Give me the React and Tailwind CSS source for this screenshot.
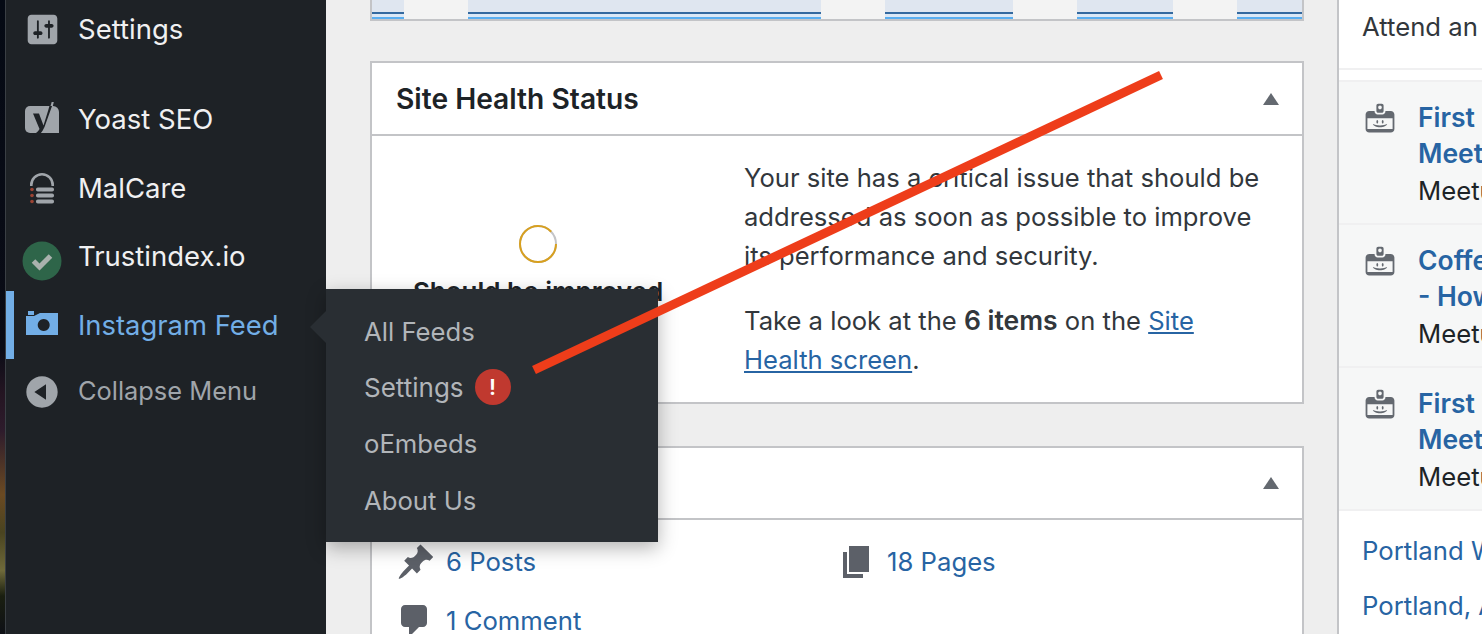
const font = { fontFamily: 'Inter, "Noto Sans", sans-serif' };

function Dash({ d, size = 40, className = "" }) {
  return (
    <svg viewBox="0 0 20 20" width={size} height={size} className={className} fill="currentColor">
      <path d={d} />
    </svg>
  );
}

const P = {
  settings: "M18 16V4c0-1.1-.9-2-2-2H4c-1.1 0-2 .9-2 2v12c0 1.1.9 2 2 2h12c1.1 0 2-.9 2-2zM8 11h1c.55 0 1 .45 1 1s-.45 1-1 1H8v1.5c0 .28-.22.5-.5.5s-.5-.22-.5-.5V13H6c-.55 0-1-.45-1-1s.45-1 1-1h1V5.5c0-.28.22-.5.5-.5s.5.22.5.5V11zm5-2h-1c-.55 0-1-.45-1-1s.45-1 1-1h1V5.5c0-.28.22-.5.5-.5s.5.22.5.5V7h1c.55 0 1 .45 1 1s-.45 1-1 1h-1v5.5c0 .28-.22.5-.5.5s-.5-.22-.5-.5V9z",
  collapse: "M10 2.16c4.33 0 7.84 3.51 7.84 7.84s-3.51 7.84-7.84 7.84S2.16 14.33 2.16 10 5.71 2.16 10 2.16zm2 11.72V6.12L6.18 9.97z",
  pin: "M10.44 3.02l1.82-1.82 6.36 6.35-1.83 1.82c-1.05-.68-2.48-.57-3.41.36l-.75.75c-.92.93-1.04 2.35-.35 3.41l-1.83 1.82-2.41-2.41-2.8 2.79c-.42.42-3.38 2.71-3.8 2.29s1.86-3.39 2.28-3.81l2.79-2.79L4.1 9.36l1.83-1.82c1.05.69 2.48.57 3.4-.36l.75-.75c.93-.92 1.05-2.35.36-3.41z",
  pages: "M6 15V2h10v13H6zm-1 1h8v2H3V5h2v11z",
  comment: "M5 2h9c1.1 0 2 .9 2 2v7c0 1.1-.9 2-2 2h-2l-5 5v-5H5c-1.1 0-2-.9-2-2V4c0-1.1.9-2 2-2z",
  nametag: "M12 5V2c0-.55-.45-1-1-1H9c-.55 0-1 .45-1 1v3c0 .55.45 1 1 1h2c.55 0 1-.45 1-1zm-2-3c.55 0 1 .45 1 1s-.45 1-1 1-1-.45-1-1 .45-1 1-1zm8 13V7c0-1.1-.9-2-2-2h-3v.33C13 6.25 12.25 7 11.33 7H8.67C7.75 7 7 6.25 7 5.33V5H4c-1.1 0-2 .9-2 2v8c0 1.1.9 2 2 2h12c1.1 0 2-.9 2-2zm-1-6v6H3V9h14zm-8 2c0-.55-.22-1-.5-1s-.5.45-.5 1 .22 1 .5 1 .5-.45.5-1zm3 0c0-.55-.22-1-.5-1s-.5.45-.5 1 .22 1 .5 1 .5-.45.5-1zm-5.96 1.21c.92.48 2.34.79 3.96.79s3.04-.31 3.96-.79c-.21 1-1.89 1.79-3.96 1.79s-3.75-.79-3.96-1.79z",
};

function YoastIcon() {
  return (
    <svg viewBox="0 0 36 42" width="36" height="42">
      <path d="M6 7h23a6 6 0 0 1 6 6v21H6a5 5 0 0 1-5-5V12a5 5 0 0 1 5-5z" fill="#a0a5aa" />
      <path d="M9 14.500h6l4.500 12L24 12l3-10.500h3L20.500 28c-2 5-5.500 9-10.500 11l-.8-3.500c3-1 5-3 6.300-5.500z" fill="#1e2226" />
      <path d="M27.700 3l-1.200 4h2.300l1-4z" fill="#a0a5aa" />
    </svg>
  );
}

function MalCareIcon() {
  return (
    <svg viewBox="0 0 28 32" width="28" height="32">
      <path d="M3.300 14V13a10.700 10.700 0 0 1 21.400 0v1" fill="none" stroke="#a0a5aa" strokeWidth="2.600" />
      <rect x="8" y="15.500" width="18" height="4" rx="1.800" fill="#a0a5aa" />
      <rect x="8" y="21.500" width="18" height="4" rx="1.800" fill="#a0a5aa" />
      <rect x="8" y="27.500" width="18" height="4" rx="1.800" fill="#a0a5aa" />
      <circle cx="4" cy="17.500" r="1.800" fill="#9c4433" />
      <circle cx="4" cy="23.500" r="1.800" fill="#9c4433" />
      <circle cx="4" cy="29.500" r="1.800" fill="#9c4433" />
    </svg>
  );
}

function TrustIcon() {
  return (
    <svg viewBox="0 0 40 40" width="40" height="40">
      <circle cx="20" cy="20" r="19.500" fill="#2e6549" />
      <path d="M11.500 20l6 6L28.500 15" fill="none" stroke="#a9b2ad" strokeWidth="5" />
    </svg>
  );
}

function CameraIcon() {
  return (
    <svg viewBox="0 0 32 24" width="32" height="24">
      <path fillRule="evenodd" fill="#72aee6" d="M2 0h6v4H2zM0 5h8l6-3h18v22H0zM17.700 8a6 6 0 1 0 .01 0z" />
    </svg>
  );
}

function MenuRow({ icon, label, h, active, muted, iconClass = "" }) {
  return (
    <div className={`flex items-center border-l-8 ${h} ${active ? "border-[#72aee6]" : "border-transparent"}`}>
      <div className={`w-[56px] mr-[8px] flex justify-center ${iconClass}`}>{icon}</div>
      <span className={active ? "text-[#72aee6] text-[27.4px]" : muted ? "text-[#a0a5aa] text-[25.4px]" : "text-[#f0f0f1] text-[27.5px]"}>{label}</span>
    </div>
  );
}

function Panel({ title, className, head, children }) {
  return (
    <section className={`border-2 border-[#c3c4c7] bg-white ${className}`}>
      <header className={`${head} flex items-center justify-between pl-[24px] pr-[23px] border-b-2 border-[#c3c4c7]`}>
        <h2 className="font-semibold text-[28.2px] pt-[2px] text-[#1d2327]">{title}</h2>
        <svg width="16" height="12" viewBox="0 0 16 12"><path d="M8 0l8 12H0z" fill="#646970" /></svg>
      </header>
      {children}
    </section>
  );
}

function Meetup({ a, b }) {
  return (
    <div className="h-[143px] border-t-2 border-[#f0f0f1] flex pl-[23px] pt-[17px] whitespace-nowrap">
      <div className="w-[56px] shrink-0 pt-[3px] text-[#646970]"><Dash d={P.nametag} size={36} /></div>
      <div className="leading-[36px]">
        <div className="font-semibold text-[26.5px] text-[#2764a3]">{a}</div>
        <div className="font-semibold text-[26.5px] text-[#2764a3]">{b}</div>
        <div className="text-[#1d2327] leading-[39px]">Meetup</div>
      </div>
    </div>
  );
}

function Chart() {
  const seg = (w, k) => (
    <div key={k} className="h-full flex flex-col" style={{ width: w }}>
      <div className="h-[12px] bg-[#dfe6f0]" />
      <div className="h-[2px] bg-[#34699f]" />
      <div className="h-[3px] bg-[#dbe8f6]" />
      <div className="h-[2px] bg-[#5aaef0]" />
    </div>
  );
  const gap = (w, k) => <div key={k} className="h-full bg-[#f3f3f3]" style={{ width: w }} />;
  return (
    <div className="flex h-[19px]">
      {seg(32, 1)}{gap(64, 2)}{seg(353, 3)}{gap(64, 4)}{seg(128, 5)}{gap(64, 6)}{seg(96, 7)}{gap(64, 8)}{seg(65, 9)}
    </div>
  );
}

export default function App() {
  return (
    <div style={font} className="relative flex h-[634px] w-[1482px] overflow-hidden bg-[#eeeeee] text-[25.7px] leading-[39px] text-[#32373c]">
      <div className="w-[6px] shrink-0 border-r border-[#3a3f44] bg-[linear-gradient(180deg,#050a14_0%,#0a0c16_55%,#241522_62%,#2e1c2c_68%,#6b4a22_78%,#4a4420_84%,#6f6a3a_90%,#1a1f10_94%,#0e1016_100%)]" />
      <aside className="relative w-[320px] shrink-0 bg-[#1e2226]">
        <MenuRow h="h-[58px]" label="Settings" icon={<span className="text-[#a0a5aa]"><Dash d={P.settings} size={37} /></span>} />
        <div className="h-[27px]" />
        <MenuRow h="h-[69px]" label="Yoast SEO" icon={<YoastIcon />} />
        <MenuRow h="h-[68px]" label="MalCare" icon={<MalCareIcon />} />
        <MenuRow h="h-[69px]" label="Trustindex.io" icon={<TrustIcon />} iconClass="mt-[8px]" />
        <MenuRow h="h-[68px]" label="Instagram Feed" active icon={<CameraIcon />} iconClass="-mt-[4px]" />
        <MenuRow h="h-[63px]" label="Collapse Menu" muted icon={<span className="text-[#a0a5aa] mt-[2px]"><Dash d={P.collapse} /></span>} />
        <div className="absolute left-[304px] top-[327px] w-0 h-0 border-y-[16px] border-y-transparent border-r-[16px] border-r-[#292e33] -mt-[16px] z-20" />
      </aside>

      <main className="flex flex-1 min-w-0">
        <div className="w-[978px] shrink-0 pl-[44px]">
          <div className="h-[21px] border-x-2 border-b-2 border-[#c3c4c7] bg-[#f3f3f3]"><Chart /></div>
          <Panel title="Site Health Status" head="h-[73px]" className="mt-[40px] h-[343px]">
            <div className="flex">
              <div className="w-[332px] shrink-0 flex flex-col items-center pt-[88px]">
                <svg width="40" height="40" viewBox="0 0 40 40">
                  <circle cx="20" cy="20" r="18" fill="none" stroke="#c3c4c7" strokeWidth="2" />
                  <circle cx="20" cy="20" r="18" fill="none" stroke="#d8a01f" strokeWidth="2" strokeDasharray="99 200" />
                </svg>
                <div className="font-semibold text-[26px] text-[#1d2327] whitespace-nowrap mt-[8px]">Should be improved</div>
              </div>
              <div className="pl-[40px] pr-[30px] pt-[22px] text-[25.6px]">
                <p className="mb-[26px]">Your site has a critical issue that should be addressed as soon as possible to improve its performance and security.</p>
                <p>Take a look at the <strong className="font-semibold text-[26.5px]">6 items</strong> on the <a className="text-[#2764a3] underline">Site Health screen</a>.</p>
              </div>
            </div>
          </Panel>
          <Panel title="At a Glance" head="h-[72px]" className="mt-[42px] h-[300px]">
            <div className="pt-[22px] pl-[22px] text-[#2764a3]">
              <div className="grid grid-cols-[443px_1fr] h-[59px]">
                <div className="flex items-start"><Dash d={P.pin} className="text-[#5c6068] ml-[2px] mr-[10px]" /><span>6 Posts</span></div>
                <div className="flex items-start"><Dash d={P.pages} className="text-[#5c6068] mr-[10px]" /><span>18 Pages</span></div>
              </div>
              <div className="flex items-start"><Dash d={P.comment} className="text-[#5c6068] ml-[1px] mr-[11px]" /><span>1 Comment</span></div>
            </div>
          </Panel>
        </div>

        <div className="ml-[33px] flex-1 min-w-0 border-l-2 border-[#c3c4c7] bg-white whitespace-nowrap">
          <div className="h-[70px] pl-[23px] pt-[7px] border-b-2 border-[#f0f0f1]">Attend an upcoming event</div>
          <div className="h-[10px]" />
          <div className="bg-[#f6f7f7]">
            <Meetup a="First Tuesday" b="Meetup" />
            <Meetup a="Coffee & Code" b="- How to" />
            <Meetup a="First Thursday" b="Meetup" />
          </div>
          <div className="border-t-2 border-[#f0f0f1] pl-[23px] pt-[20px] text-[#2764a3]">
            <div className="h-[55px]">Portland WordPress</div>
            <div>Portland, August</div>
          </div>
        </div>
      </main>

      <div className="absolute left-[326px] top-[289px] w-[332px] h-[253px] bg-[#292e33] shadow-[0_6px_18px_rgba(0,0,0,0.3)] pl-[38px] pt-[15px] text-[#b1b5b9] z-10">
        <div className="h-[56px] flex items-center -mt-[1px]">All Feeds</div>
        <div className="h-[56px] flex items-center"><span className="text-[26px]">Settings</span><span className="ml-[11px] w-[36px] h-[36px] rounded-full bg-[#c0392f] text-white text-[22px] font-semibold flex items-center justify-center">!</span></div>
        <div className="h-[56px] flex items-center">oEmbeds</div>
        <div className="h-[57px] flex items-center pt-[2px]">About Us</div>
      </div>

      <svg className="absolute inset-0 z-30 pointer-events-none" width="1482" height="634">
        <line x1="534" y1="370" x2="1161" y2="75" stroke="#ee3d1a" strokeWidth="9" />
      </svg>
    </div>
  );
}
